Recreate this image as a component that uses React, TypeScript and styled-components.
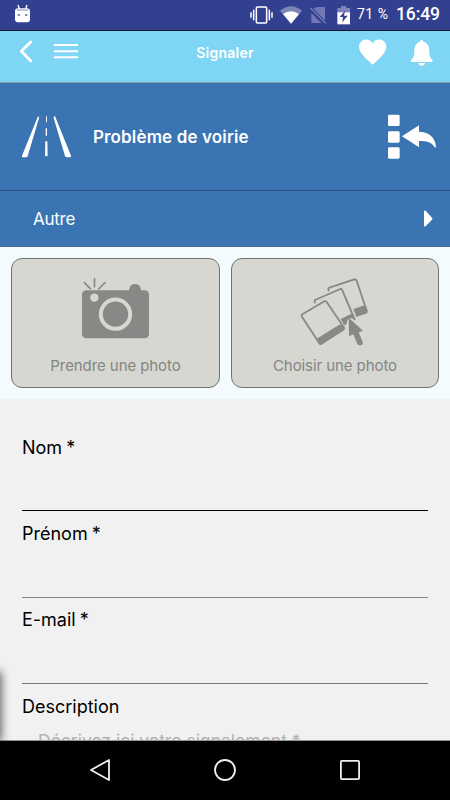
import React from "react";
import styled, { createGlobalStyle } from "styled-components";

const Global = createGlobalStyle`
  *, *::before, *::after { box-sizing: border-box; }
  body { margin: 0; font-family: Inter, "Liberation Sans", sans-serif; }
  button { font: inherit; color: inherit; border: 0; padding: 0; background: none; }
  svg { display: block; flex: none; }
`;

const Screen = styled.div`
  position: relative;
  width: 450px;
  height: 800px;
  display: flex;
  flex-direction: column;
  overflow: hidden;
  background: #f1f1f1;
`;

const StatusBar = styled.div`
  height: 31px;
  flex: none;
  display: flex;
  justify-content: space-between;
  padding-right: 11px;
  background: #334090;
  border-bottom: 1px solid #101923;
  color: #fff;
  font-family: Roboto, sans-serif;
`;

const StatusGroup = styled.div`
  display: flex;
  align-items: flex-start;
`;

const Battery = styled.span`
  width: 39px;
  padding-top: 4px;
  font-size: 14px;
  letter-spacing: 0.5px;
  line-height: 20px;
  white-space: nowrap;
`;

const Clock = styled.span`
  width: 43px;
  padding-top: 4px;
  font-size: 17.5px;
  font-weight: 500;
  letter-spacing: -0.1px;
  line-height: 20px;
  white-space: nowrap;
`;

const AppBar = styled.header`
  height: 52px;
  flex: none;
  display: grid;
  grid-template-columns: 150px 150px 150px;
  background: #7fd5f4;
  border-bottom: 1px solid #7d9fb0;
`;

const BarGroup = styled.div`
  display: flex;
  align-items: flex-start;
`;

const Title = styled.h1`
  margin: 0;
  padding-top: 12px;
  text-align: center;
  font-size: 14px;
  line-height: 20px;
  font-weight: 600;
  letter-spacing: 0.25px;
  color: #fff;
`;

const CategoryRow = styled.div`
  height: 108px;
  flex: none;
  display: flex;
  align-items: center;
  padding: 0 12px 0 21px;
  background: #3a74b3;
  border-bottom: 1px solid #28517e;
  color: #fff;
`;

const CategoryName = styled.h2`
  flex: 1;
  margin: 0 0 0 21px;
  font-size: 17px;
  line-height: 24px;
  font-weight: 600;
  letter-spacing: 0.14px;
  white-space: nowrap;
`;

const SubRow = styled.div`
  height: 56px;
  flex: none;
  display: flex;
  align-items: center;
  justify-content: space-between;
  padding: 0 17px 0 33px;
  background: #3a74b3;
  border-bottom: 1px solid #4e6f91;
  color: #fff;
  font-size: 17px;
  letter-spacing: -0.25px;
`;

const PhotoArea = styled.div`
  height: 152px;
  flex: none;
  display: grid;
  grid-template-columns: 209px 208px;
  column-gap: 11px;
  padding: 11px 0 11px 11px;
  background: #f3fbff;
`;

const PhotoButton = styled.button`
  display: flex;
  flex-direction: column;
  align-items: center;
  justify-content: space-between;
  padding: 18px 0 10px;
  background: #d6d7d1;
  border: 1px solid #74736f;
  border-radius: 11px;
  color: #858583;
`;

const PhotoLabel = styled.span`
  font-size: 15px;
  letter-spacing: -0.08px;
  line-height: 22px;
`;

const Form = styled.main`
  height: 342px;
  flex: none;
  overflow: hidden;
  padding: 36px 22px 0;
  border-bottom: 1px solid #929292;
`;

const Field = styled.label`
  display: block;
  height: 86px;
  font-size: 18px;
  line-height: 26px;
  word-spacing: -1px;
  color: #000;
`;

const Underline = styled.span<{ $height: number; $color: string }>`
  display: block;
  height: ${(p) => p.$height}px;
  border-bottom: 1px solid ${(p) => p.$color};
`;

const DescriptionLabel = styled.div`
  padding-top: 1px;
  font-size: 18px;
  line-height: 26px;
  color: #000;
`;

const Placeholder = styled.div`
  padding: 9px 0 0 16px;
  font-size: 17.5px;
  line-height: 24px;
  color: #b2b2b6;
  white-space: nowrap;
`;

const DrawerShadow = styled.div`
  position: absolute;
  left: -10px;
  top: 673px;
  width: 10px;
  height: 67px;
  box-shadow: 0 0 10px 1px rgba(0, 0, 0, 0.65);
`;

const NavBar = styled.nav`
  position: relative;
  height: 59px;
  flex: none;
  display: flex;
  align-items: center;
  justify-content: center;
  gap: 99px;
  padding-bottom: 1px;
  background: #000;
`;

const AndroidHead = () => (
  <svg width="33" height="30" viewBox="0 0 99 90">
    <path d="M54 15l5 14M81 15l-5 14" stroke="#fff" strokeWidth="4" />
    <path d="M45 34q0-9 9-9h27q9 0 9 9v24q0 9-9 9H54q-9 0-9-9z" fill="#fff" />
    <path d="M50 27h35v6H50z" fill="#bfc3df" />
    <path d="M53 42h7v6h-7zM75 42h7v6h-7z" fill="#868dc0" />
  </svg>
);

const StatusIcons = () => (
  <svg width="110" height="30" viewBox="66 0 330 90">
    <g fill="none" stroke="#fff" strokeWidth="4.500">
      <rect x="94" y="21" width="31" height="48" rx="3" />
      <path d="M86 29v32M133 29v32M78 37v16M141 37v16" />
    </g>
    <path d="M165 32q33-27 66 0L198 71z" fill="#7c84b9" />
    <path d="M174 42q24-17 48 0L198 71z" fill="#fff" />
    <path d="M276 21h24v40l-35-35zM259 39l30 30h-30z" fill="#7079b3" />
    <path d="M256 24l46 46" stroke="#7079b3" strokeWidth="4" />
    <path d="M348 18h16v6h11v18h-38V24h11z" fill="#7c84b9" />
    <path d="M337 37h38v36h-38z" fill="#fff" />
    <path d="M360 32l-16 19h10l-2 16 16-20h-11z" fill="#334090" />
  </svg>
);

const BackIcon = () => (
  <svg width="42" height="51" viewBox="0 93 126 153" fill="none" stroke="#fff">
    <path d="M92 126L64 154l28 28" strokeWidth="8.500" strokeLinecap="round" strokeLinejoin="round" />
  </svg>
);

const MenuIcon = () => (
  <svg width="45" height="51" viewBox="126 93 135 153" stroke="#fff">
    <path d="M164 135h68M164 153.500h68M164 172h68" strokeWidth="6" strokeLinecap="round" />
  </svg>
);

const HeartBellIcons = () => (
  <svg width="150" height="51" viewBox="225 93 450 153" fill="#fff">
    <path d="M443 194C432 182 402 162 402 140c0-24 33-30 41-9 8-21 41-15 41 9 0 22-30 42-41 54z" />
    <path d="M590 120c4 0 5 3 5 5 13 4 18 13 18 27 0 18 4 22 9 27 2 5 0 7-3 7h-58c-3 0-5-3-2-7 5-5 9-9 9-27 0-14 5-23 17-27 0-2 1-5 5-5zM580 189h20c0 11-20 11-20 0z" />
  </svg>
);

const RoadIcon = () => (
  <svg width="51" height="42" viewBox="63 107 153 126" fill="#fff">
    <path d="M114 108q4 0 3 5L83 228q-1 3-5 3H68q-3-1-2-5zM162 108q4-1 5 4l46 114q1 5-3 5h-9q-4 0-6-4l-34-114z" />
    <path d="M138 108h3v18h-3zM137 144h4v22h-4zM136 183h6l1 43q-4 3-8 0z" />
  </svg>
);

const ListReturnIcon = () => (
  <svg width="51" height="48" viewBox="261 99 153 144" fill="#fff">
    <rect x="264" y="104" width="35" height="34" rx="4" />
    <rect x="264" y="154" width="35" height="34" rx="4" />
    <rect x="264" y="202" width="35" height="34" rx="4" />
    <path d="M306 169l51-33v19c26 0 49 14 51 46l-3 2c-10-17-25-20-48-20v19z" />
  </svg>
);

const CameraIcon = () => (
  <svg width="69" height="63" viewBox="243 95 207 189">
    <rect x="246" y="135" width="201" height="144" rx="13" fill="#888886" />
    <path d="M387 137v-4q3-17 18-17t18 17v4z" fill="#888886" />
    <path d="M253 112l18 18M283.500 100v24M315 112l-19 19" stroke="#888886" strokeWidth="5" strokeLinecap="round" />
    <circle cx="283" cy="157" r="12.500" fill="#d6d7d1" />
    <circle cx="346.500" cy="206.500" r="44" fill="none" stroke="#d6d7d1" strokeWidth="12" />
  </svg>
);

const PicturesIcon = () => (
  <svg width="70" height="69" viewBox="240 96 210 207" fill="none" stroke="#888886" strokeWidth="5.500" strokeLinejoin="round" strokeLinecap="round">
    <path d="M326 137l-1-6 3-3 75-25q5-1 7 4l30 90" />
    <path d="M400 192l36-12 7 18q1 6-4 8l-30 9z" fill="#888886" stroke="none" />
    <path d="M284 173l1-8 76-33q4-1 6 4l37 87" />
    <path d="M362 222l31-15q10 2 11 17-14-9-22 2l-4 15-7-3z" fill="#888886" stroke="none" />
    <path d="M247 208l66-39q4-2 7 2l51 75q3 5-2 8l-63 41q-5 4-9-2l-51-78q-3-4 1-7z" />
    <path d="M289 282l71-44 14 9q2 5-3 9l-65 42q-6 4-10-2z" fill="#888886" stroke="none" />
    <path d="M386 218l43 39-13 5 12 29c4 11-13 14-17 4l-11-27-13 6z" fill="#888886" stroke="none" />
  </svg>
);

const FIELDS = [
  { label: "Nom *", height: 50, line: "#000" },
  { label: "Prénom *", height: 51, line: "#858585" },
  { label: "E-mail *", height: 51, line: "#777" },
];

export default function App() {
  return (
    <Screen>
      <Global />
      <StatusBar>
        <AndroidHead />
        <StatusGroup>
          <StatusIcons />
          <Battery>71 %</Battery>
          <Clock>16:49</Clock>
        </StatusGroup>
      </StatusBar>
      <AppBar>
        <BarGroup>
          <BackIcon />
          <MenuIcon />
        </BarGroup>
        <Title>Signaler</Title>
        <HeartBellIcons />
      </AppBar>
      <CategoryRow>
        <RoadIcon />
        <CategoryName>Problème de voirie</CategoryName>
        <ListReturnIcon />
      </CategoryRow>
      <SubRow>
        Autre
        <svg width="10" height="17" viewBox="0 0 30 51" fill="#fff">
          <path d="M3 5q0-5 5-3l19 21q3 3 0 6L8 49q-5 2-5-3z" />
        </svg>
      </SubRow>
      <PhotoArea>
        <PhotoButton>
          <CameraIcon />
          <PhotoLabel>Prendre une photo</PhotoLabel>
        </PhotoButton>
        <PhotoButton>
          <PicturesIcon />
          <PhotoLabel>Choisir une photo</PhotoLabel>
        </PhotoButton>
      </PhotoArea>
      <Form>
        {FIELDS.map((f) => (
          <Field key={f.label}>
            {f.label}
            <Underline $height={f.height} $color={f.line} />
          </Field>
        ))}
        <DescriptionLabel>Description</DescriptionLabel>
        <Placeholder>Décrivez ici votre signalement *</Placeholder>
      </Form>
      <DrawerShadow />
      <NavBar>
        <svg width="26" height="26" viewBox="0 0 26 26" fill="none" stroke="#eee" strokeWidth="1.800" strokeLinejoin="round">
          <path d="M22 3v20L4 13z" />
        </svg>
        <svg width="26" height="26" viewBox="0 0 26 26" fill="none" stroke="#eee" strokeWidth="1.800">
          <circle cx="13" cy="13" r="10" />
        </svg>
        <svg width="26" height="26" viewBox="0 0 26 26" fill="none" stroke="#eee" strokeWidth="1.800">
          <rect x="3.900" y="3.900" width="18.200" height="18.200" rx="1" />
        </svg>
      </NavBar>
    </Screen>
  );
}
